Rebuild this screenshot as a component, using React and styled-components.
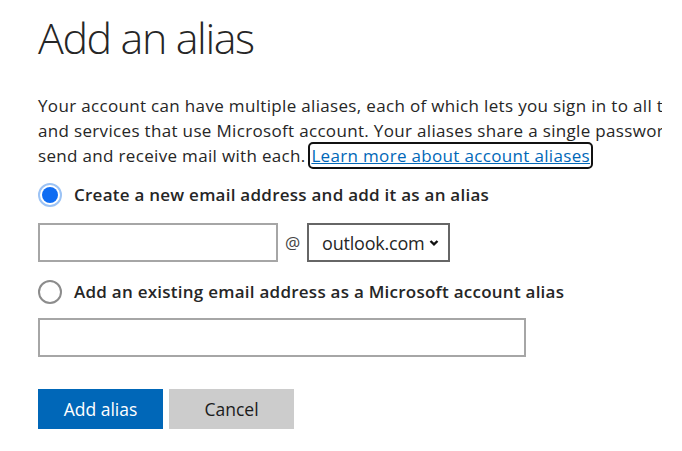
import React, { useState } from "react";
import styled, { createGlobalStyle } from "styled-components";

const GlobalStyle = createGlobalStyle`
  body {
    margin: 0;
    padding: 0;
    background: #fff;
    font-family: "Open Sans", "Noto Sans", Arial, sans-serif;
    color: #262626;
  }
`;

const Page = styled.div`
  width: 662px;
  height: 451px;
  overflow: hidden;
  padding: 12px 0 0 38px;
  box-sizing: border-box;
`;

const Title = styled.h1`
  margin: 0;
  font-size: 43px;
  font-weight: 300;
  line-height: 52px;
  color: #262626;
  letter-spacing: -1.4px;
`;

const Intro = styled.p`
  margin: 29px 0 0;
  font-size: 17px;
  line-height: 25px;
  white-space: nowrap;
  letter-spacing: 0.33px;
`;

const MoreLink = styled.a`
  color: #0067b8;
  text-decoration: underline;
  outline: 2px solid #111;
  outline-offset: 0px;
  border-radius: 3px;
  padding: 0 1px;
`;

const OptionRow = styled.label`
  display: flex;
  align-items: center;
  gap: 12px;
  margin-top: ${(p) => p.$top}px;
  font-size: 17px;
  font-weight: 600;
  line-height: 24px;
  letter-spacing: 0.25px;
  cursor: pointer;
`;

const Radio = styled.span`
  width: 24px;
  height: 24px;
  box-sizing: border-box;
  border-radius: 50%;
  flex-shrink: 0;
  display: flex;
  align-items: center;
  justify-content: center;
  background: #fff;
  border: ${(p) => (p.$checked ? "2px solid #9cc3f5" : "2px solid #8c8c8c")};

  &::after {
    content: "";
    width: 16px;
    height: 16px;
    border-radius: 50%;
    background: #0f6cf2;
    display: ${(p) => (p.$checked ? "block" : "none")};
  }
`;

const FieldRow = styled.div`
  display: flex;
  align-items: center;
  gap: 6px;
  margin-top: 16px;
`;

const TextField = styled.input`
  width: ${(p) => p.$width}px;
  height: 39px;
  box-sizing: border-box;
  border: 2px solid #a6a6a6;
  padding: 0 8px;
  font: inherit;
  font-size: 17px;
  outline: none;
  margin-top: ${(p) => p.$top || 0}px;
  display: block;
`;

const At = styled.span`
  font-size: 17px;
  color: #444;
  width: 17px;
  text-align: center;
`;

const SelectBox = styled.div`
  width: 143px;
  height: 39px;
  box-sizing: border-box;
  border: 2px solid #666;
  display: flex;
  align-items: center;
  justify-content: space-between;
  padding: 0 9px 0 13px;
  font-size: 18px;
  letter-spacing: -0.2px;
  color: #262626;
  cursor: pointer;
`;

const Actions = styled.div`
  display: flex;
  gap: 6px;
  margin-top: 32px;
`;

const Button = styled.button`
  width: 125px;
  height: 40px;
  border: none;
  font: inherit;
  font-size: 17.5px;
  cursor: pointer;
  background: ${(p) => (p.$primary ? "#0067b8" : "#cccccc")};
  color: ${(p) => (p.$primary ? "#fff" : "#1b1b1b")};
`;

const Chevron = () => (
  <svg width="10" height="8" viewBox="0 0 10 8">
    <path d="M1.5 2 L5 5.4 L8.5 2" fill="none" stroke="#111" strokeWidth="2.4" />
  </svg>
);

const App = () => {
  const [mode, setMode] = useState("new");

  return (
    <>
      <GlobalStyle />
      <Page>
        <Title>Add an alias</Title>
        <Intro>
          Your account can have multiple aliases, each of which lets you sign in to all the Microsoft apps
          <br />
          and services that use Microsoft account. Your aliases share a single password, and you can
          <br />
          send and receive mail with each. <MoreLink href="#">Learn more about account aliases</MoreLink>
        </Intro>

        <OptionRow $top={15} onClick={() => setMode("new")}>
          <Radio $checked={mode === "new"} />
          Create a new email address and add it as an alias
        </OptionRow>
        <FieldRow>
          <TextField $width={240} />
          <At>@</At>
          <SelectBox>
            outlook.com
            <Chevron />
          </SelectBox>
        </FieldRow>

        <OptionRow $top={18} onClick={() => setMode("existing")}>
          <Radio $checked={mode === "existing"} />
          Add an existing email address as a Microsoft account alias
        </OptionRow>
        <TextField $width={488} $top={14} />

        <Actions>
          <Button $primary>Add alias</Button>
          <Button>Cancel</Button>
        </Actions>
      </Page>
    </>
  );
};

export default App;
